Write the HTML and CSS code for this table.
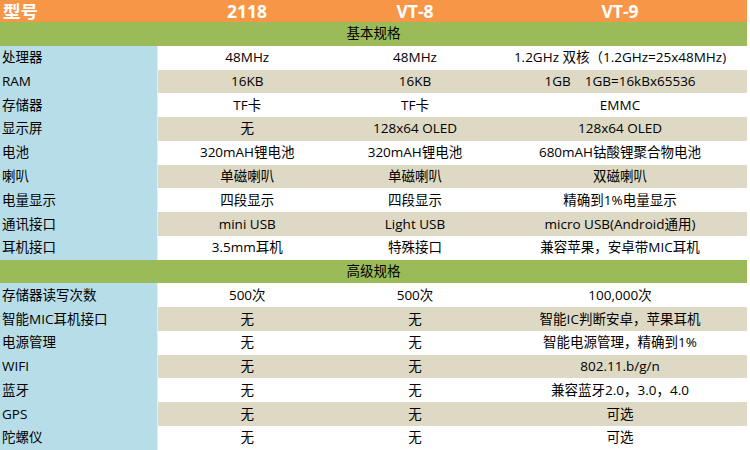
FILE: index.html
```html
<!DOCTYPE html>
<html lang="zh-CN">
<head>
<meta charset="utf-8">
<title>规格对比</title>
<link rel="stylesheet" href="styles.css">
</head>
<body>
<table class="spec">
  <colgroup>
    <col class="c-name">
    <col class="c-a">
    <col class="c-b">
    <col class="c-c">
  </colgroup>
  <thead>
    <tr class="head">
      <th class="name">型号</th>
      <th>2118</th>
      <th>VT-8</th>
      <th>VT-9</th>
    </tr>
  </thead>
  <tbody>
    <tr class="section"><td colspan="4">基本规格</td></tr>
    <tr class="odd"><td class="name">处理器</td><td>48MHz</td><td>48MHz</td><td>1.2GHz 双核（1.2GHz=25x48MHz)</td></tr>
    <tr class="even"><td class="name">RAM</td><td>16KB</td><td>16KB</td><td>1GB&nbsp;&nbsp;&nbsp; 1GB=16kBx65536</td></tr>
    <tr class="odd"><td class="name">存储器</td><td>TF卡</td><td>TF卡</td><td>EMMC</td></tr>
    <tr class="even"><td class="name">显示屏</td><td>无</td><td>128x64 OLED</td><td>128x64 OLED</td></tr>
    <tr class="odd"><td class="name">电池</td><td>320mAH锂电池</td><td>320mAH锂电池</td><td>680mAH钴酸锂聚合物电池</td></tr>
    <tr class="even"><td class="name">喇叭</td><td>单磁喇叭</td><td>单磁喇叭</td><td>双磁喇叭</td></tr>
    <tr class="odd"><td class="name">电量显示</td><td>四段显示</td><td>四段显示</td><td>精确到1%电量显示</td></tr>
    <tr class="even"><td class="name">通讯接口</td><td>mini USB</td><td>Light USB</td><td>micro USB(Android通用)</td></tr>
    <tr class="odd"><td class="name">耳机接口</td><td>3.5mm耳机</td><td>特殊接口</td><td>兼容苹果，安卓带MIC耳机</td></tr>
    <tr class="section"><td colspan="4">高级规格</td></tr>
    <tr class="odd"><td class="name">存储器读写次数</td><td>500次</td><td>500次</td><td>100,000次</td></tr>
    <tr class="even"><td class="name">智能MIC耳机接口</td><td>无</td><td>无</td><td>智能IC判断安卓，苹果耳机</td></tr>
    <tr class="odd"><td class="name">电源管理</td><td>无</td><td>无</td><td>智能电源管理，精确到1%</td></tr>
    <tr class="even"><td class="name">WIFI</td><td>无</td><td>无</td><td>802.11.b/g/n</td></tr>
    <tr class="odd"><td class="name">蓝牙</td><td>无</td><td>无</td><td>兼容蓝牙2.0，3.0，4.0</td></tr>
    <tr class="even"><td class="name">GPS</td><td>无</td><td>无</td><td>可选</td></tr>
    <tr class="odd"><td class="name">陀螺仪</td><td>无</td><td>无</td><td>可选</td></tr>
  </tbody>
</table>
</body>
</html>
```
FILE: styles.css
```css
html, body {
  margin: 0;
  padding: 0;
  background: #ffffff;
}
body {
  font-family: "Open Sans", "Noto Sans CJK SC", sans-serif;
  color: #000000;
}
.spec {
  width: 747px;
  table-layout: fixed;
  border-collapse: collapse;
  border-spacing: 0;
}
.c-name { width: 157px; }
.c-a { width: 180px; }
.c-b { width: 156px; }
.c-c { width: 254px; }

.spec th, .spec td {
  padding: 0;
  text-align: center;
  vertical-align: middle;
  white-space: nowrap;
  font-size: 13.5px;
  line-height: 17px;
}
.head th {
  height: 22px;
  background: #f79646;
  color: #ffffff;
  font-weight: bold;
  font-size: 17.5px;
  line-height: 22px;
}
.head th.name {
  text-align: left;
  padding-left: 3px;
}
.spec tbody tr { height: 23.78px; }
.section td {
  background: #9bbb59;
}
.odd td { background: #ffffff; }
.even td { background: #ddd9c4; }
.spec td.name {
  background: #b7dde8;
  text-align: left;
  padding-left: 2px;
  border-right: 1px solid #e6eef0;
}
```
